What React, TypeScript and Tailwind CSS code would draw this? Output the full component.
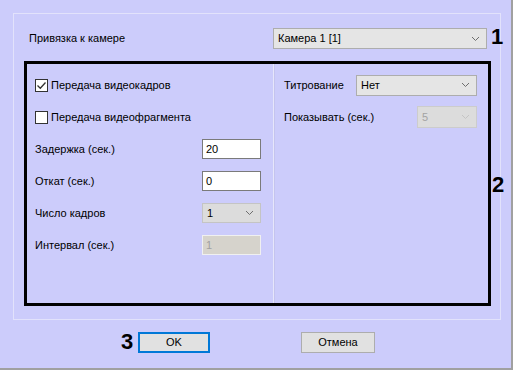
import React from "react";

function Chevron({ disabled }: { disabled?: boolean }) {
  return (
    <svg width="9" height="6" viewBox="0 0 9 6" className="shrink-0">
      <path d="M1 1 L4.5 4.5 L8 1" fill="none" stroke={disabled ? "#c4c4c4" : "#6e6e6e"} strokeWidth="1" />
    </svg>
  );
}

function Select({
  value,
  width,
  height = "h-[21px]",
  disabled,
}: {
  value: string;
  width: string;
  height?: string;
  disabled?: boolean;
}) {
  return (
    <div
      className={`${width} ${height} flex items-center justify-between border pl-[4px] pr-[6px] ${
        disabled ? "border-[#cccccc] bg-[#dcdcdc] text-[#a3a3a3]" : "border-[#adadad] bg-[#e5e5e5] text-black"
      }`}
    >
      <span>{value}</span>
      <Chevron disabled={disabled} />
    </div>
  );
}

function Input({ value, disabled }: { value: string; disabled?: boolean }) {
  return (
    <div
      className={`flex h-[20px] w-[59px] items-center border px-[3px] ${
        disabled ? "border-[#f0f0f0] bg-[#d6d3cc] text-[#a0a0a0]" : "border-[#7a7a7a] bg-white text-black"
      }`}
    >
      {value}
    </div>
  );
}

function Checkbox({ checked, label }: { checked?: boolean; label: string }) {
  return (
    <div className="flex items-center gap-[3px]">
      <div className="flex h-[13px] w-[13px] items-center justify-center border border-[#333333] bg-white">
        {checked && (
          <svg width="11" height="11" viewBox="0 0 11 11">
            <path d="M1.5 5.5 L4.3 8.3 L9.5 2.5" fill="none" stroke="#333333" strokeWidth="1.3" />
          </svg>
        )}
      </div>
      <span>{label}</span>
    </div>
  );
}

function Row({ children }: { children: React.ReactNode }) {
  return <div className="flex h-[32px] items-center">{children}</div>;
}

export default function App() {
  return (
    <div className="relative h-[370px] w-[513px] overflow-hidden border-b-2 border-r-2 border-[#a0a0a0] bg-[#ccccfb] font-['Liberation_Sans',Arial,sans-serif] text-[11px] text-black">
      {/* group box */}
      <div className="ml-[13px] mt-[13px] h-[307px] w-[488px] border border-[#e2e2fb]">
        <div className="mt-[14px] flex h-[21px] items-center justify-between pl-[15px] pr-[13px]">
          <span>Привязка к камере</span>
          <Select value="Камера 1 [1]" width="w-[214px]" />
        </div>

        {/* highlighted panel */}
        <div className="ml-[10px] mt-[12px] flex h-[245px] w-[467px] border-[3px] border-black">
          <div className="w-[246px] pl-[8px] pt-[5px]">
            <Row>
              <Checkbox checked label="Передача видеокадров" />
            </Row>
            <Row>
              <Checkbox label="Передача видеофрагмента" />
            </Row>
            <Row>
              <span className="w-[167px]">Задержка (сек.)</span>
              <Input value="20" />
            </Row>
            <Row>
              <span className="w-[167px]">Откат (сек.)</span>
              <Input value="0" />
            </Row>
            <Row>
              <span className="w-[167px]">Число кадров</span>
              <div className="flex h-[20px] w-[59px] items-center justify-between border border-[#c4c4c4] bg-[#dcdcdc] pl-[4px] pr-[6px]">
                <span>1</span>
                <Chevron />
              </div>
            </Row>
            <Row>
              <span className="w-[167px]">Интервал (сек.)</span>
              <Input value="1" disabled />
            </Row>
          </div>
          <div className="w-[2px] border-l border-r border-l-[#e6e6fb] border-r-[#c4c4ee]" />
          <div className="flex-1 pl-[9px] pt-[5px]">
            <Row>
              <span className="w-[72px]">Титрование</span>
              <Select value="Нет" width="w-[121px]" />
            </Row>
            <Row>
              <span className="w-[133px]">Показывать (сек.)</span>
              <Select value="5" width="w-[60px]" height="h-[22px]" disabled />
            </Row>
          </div>
        </div>
      </div>

      {/* buttons */}
      <div className="mt-[12px] flex gap-[91px] pl-[138px]">
        <button className="h-[21px] w-[72px] border-2 border-[#0078d7] bg-[#e1e1e1] text-center">OK</button>
        <button className="h-[21px] w-[74px] border border-[#adadad] bg-[#e1e1e1] text-center">Отмена</button>
      </div>

      {/* annotation numbers */}
      <span className="absolute left-[491px] top-[26px] text-[22px] font-bold leading-none">1</span>
      <span className="absolute left-[492px] top-[174px] text-[22px] font-bold leading-none">2</span>
      <span className="absolute left-[121px] top-[331px] text-[22px] font-bold leading-none">3</span>
    </div>
  );
}
